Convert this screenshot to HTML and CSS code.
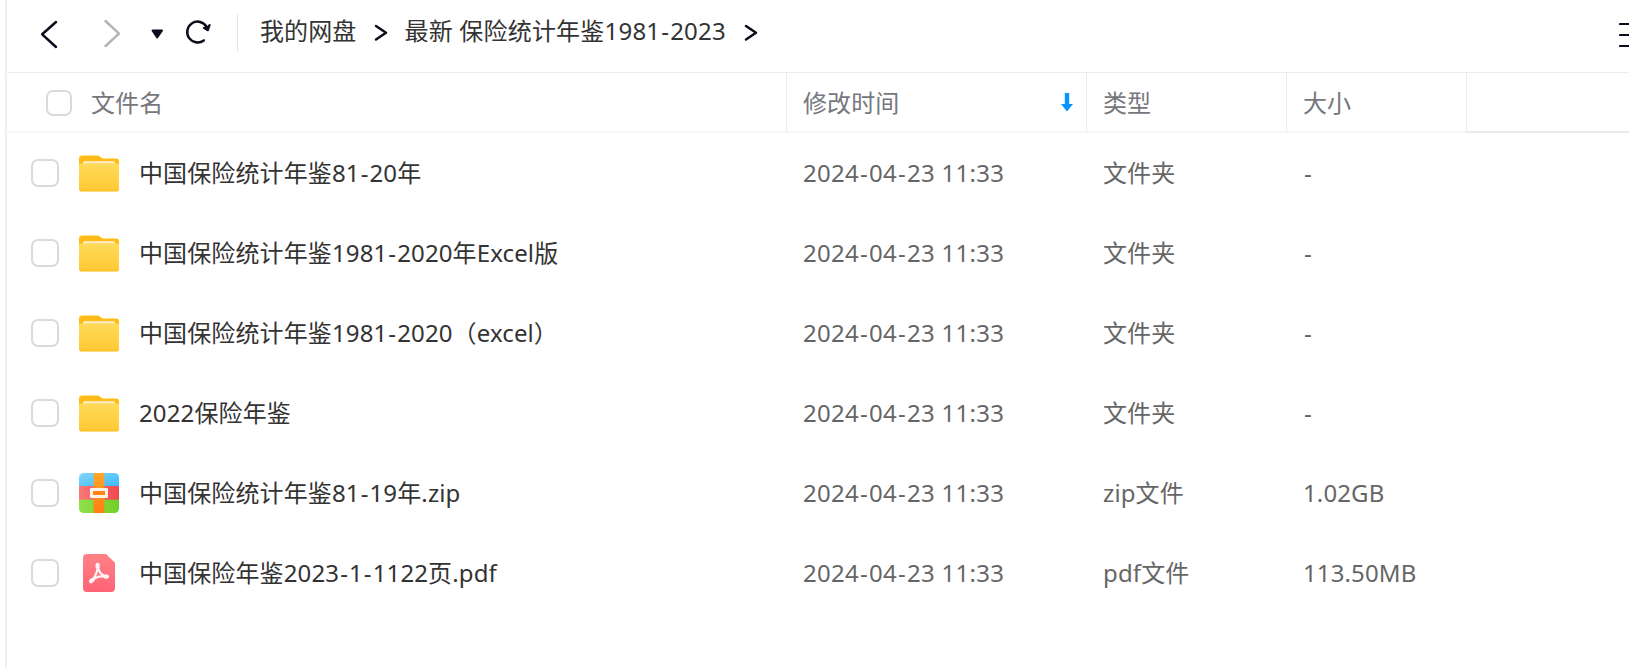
FILE: index.html
```
<!DOCTYPE html>
<html lang="zh-CN">
<head>
<meta charset="utf-8">
<title>我的网盘</title>
<link rel="stylesheet" href="styles.css">
</head>
<body>
<svg class="defs" width="0" height="0" aria-hidden="true">
  <defs>
    <linearGradient id="front" x1="0" y1="0" x2="0" y2="1"><stop offset="0" stop-color="#ffda58"/><stop offset="1" stop-color="#ffc933"/></linearGradient>
    <linearGradient id="back" x1="0" y1="0" x2="0" y2="1"><stop offset="0" stop-color="#ffbd1a"/><stop offset="1" stop-color="#ffb30a"/></linearGradient>
    <linearGradient id="blue" x1="0" y1="0" x2="1" y2="1"><stop offset="0" stop-color="#82d8ff"/><stop offset="1" stop-color="#3ab8f5"/></linearGradient>
    <linearGradient id="red" x1="0" y1="0" x2="1" y2="0"><stop offset="0" stop-color="#fb7878"/><stop offset="1" stop-color="#f04a4f"/></linearGradient>
    <linearGradient id="green" x1="0" y1="0" x2="1" y2="0"><stop offset="0" stop-color="#8fe04c"/><stop offset="1" stop-color="#72cf28"/></linearGradient>
    <linearGradient id="orange" x1="0" y1="0" x2="0" y2="1"><stop offset="0" stop-color="#ffa628"/><stop offset="1" stop-color="#ff7e12"/></linearGradient>
    <linearGradient id="pink" x1="0" y1="0" x2="0" y2="1"><stop offset="0" stop-color="#ff8286"/><stop offset="1" stop-color="#ff6376"/></linearGradient>
    <clipPath id="round"><rect width="40" height="40" rx="4.5"/></clipPath>
    <symbol id="folder" viewBox="0 0 40 40">
      <path d="M0 5.500Q0 2.500 3 2.500H18.500Q20 2.500 21.200 3.700L22 4.500Q23 5.500 24.500 5.500H37Q40 5.500 40 8.500V20H0Z" fill="url(#back)"/>
      <rect x="4" y="8" width="32" height="6" rx="1.5" fill="#ffe9b4"/>
      <path d="M0 12Q0 11 1 11H39Q40 11 40 12V35.500Q40 38.600 37 38.600H3Q0 38.600 0 35.500Z" fill="#ffb90e"/>
      <path d="M0 11.500Q0 10.500 1 10.500H39Q40 10.500 40 11.500V34.500Q40 37.500 37 37.500H3Q0 37.500 0 34.500Z" fill="url(#front)"/>
    </symbol>
    <symbol id="zip" viewBox="0 0 40 40">
      <g clip-path="url(#round)">
        <rect width="40" height="13.5" fill="url(#blue)"/>
        <rect y="13" width="40" height="14" fill="url(#red)"/>
        <rect y="26.7" width="40" height="13.3" fill="url(#green)"/>
        <rect x="14.6" width="10.8" height="40" fill="url(#orange)"/>
      </g>
      <rect x="11" y="15" width="18" height="10" rx="1.3" fill="#fff3e9"/>
      <rect x="14" y="18" width="12" height="4" fill="#ff8410"/>
    </symbol>
    <symbol id="pdf" viewBox="0 0 40 40">
      <path d="M8 1H27L36 9.800V35Q36 39 32 39H8Q4 39 4 35V5Q4 1 8 1Z" fill="url(#pink)"/>
      <g fill="none" stroke="#fff3f3" stroke-linecap="round" stroke-linejoin="round">
        <path d="M18.600 12.500C19 17 17 22.500 13 27.600C16 24.300 21.500 22.600 27.500 23.800C22.500 22.500 19.300 18 18.600 12.500Z" stroke-width="2.2"/>
        <path d="M18.600 11.900V13.800M12 28.200L13.600 26.900M26.300 23.600H28" stroke-width="4.2"/>
      </g>
    </symbol>
  </defs>
</svg>
<main class="app">
  <nav class="toolbar">
    <svg class="tool-icons" width="172" height="72" viewBox="0 0 172 72" fill="none" stroke="#080c1c" stroke-width="2.5" stroke-linecap="round" stroke-linejoin="round">
      <path d="M49 22L35.200 34.300L49 47"/>
      <path d="M98.500 21L112 33.700L98.500 46" stroke="#b5b5b6"/>
      <path d="M145.500 30.500H155L150.200 37.500Z" fill="#080c1c" stroke-width="2"/>
    </svg>
    <svg class="refresh" width="27" height="26" viewBox="0 0 27 26" fill="none" stroke="#080c1c" stroke-width="2.5" stroke-linecap="round" stroke-linejoin="round">
      <path d="M18.800 21.400A10.400 10.400 0 1 1 21.600 7.800"/>
      <path d="M18.800 9L22 8.600L24.700 6L22.900 11.300Z" fill="#080c1c" stroke-width="2"/>
    </svg>
    <span class="divider"></span>
    <span class="crumb">我的网盘</span>
    <svg class="chevron" width="14" height="20" viewBox="0 0 14 20"><path d="M2 3L12 9.800L2 16.500"/></svg>
    <span class="crumb current">最新 保险统计年鉴1981<i>-</i>2023</span>
    <svg class="chevron" width="14" height="20" viewBox="0 0 14 20"><path d="M2 3L12 9.800L2 16.500"/></svg>
    <svg class="menu" width="10" height="30" viewBox="0 0 10 30"><path d="M1 4H10M1 15H10M1 26H10"/></svg>
  </nav>
  <header class="grid head">
    <div class="cell"><span class="box"></span><span>文件名</span></div>
    <div class="cell">修改时间
      <svg class="sort" width="12" height="19" viewBox="0 0 12 19"><path d="M3.800 0H8.200V11H12L6 18.500L0 11H3.800Z" fill="#0495ff"/></svg>
    </div>
    <div class="cell">类型</div>
    <div class="cell">大小</div>
    <div class="cell rest"></div>
  </header>
  <section class="rows">
    <div class="grid row"><div class="cell"><span class="box"></span><svg class="file"><use href="#folder"/></svg><span>中国保险统计年鉴81<i>-</i>20年</span></div><div class="cell date">2024<i>-</i>04<i>-</i>23 11:33</div><div class="cell">文件夹</div><div class="cell"><i>-</i></div></div>
    <div class="grid row"><div class="cell"><span class="box"></span><svg class="file"><use href="#folder"/></svg><span>中国保险统计年鉴1981<i>-</i>2020年Excel版</span></div><div class="cell date">2024<i>-</i>04<i>-</i>23 11:33</div><div class="cell">文件夹</div><div class="cell"><i>-</i></div></div>
    <div class="grid row"><div class="cell"><span class="box"></span><svg class="file"><use href="#folder"/></svg><span>中国保险统计年鉴1981<i>-</i>2020（excel）</span></div><div class="cell date">2024<i>-</i>04<i>-</i>23 11:33</div><div class="cell">文件夹</div><div class="cell"><i>-</i></div></div>
    <div class="grid row"><div class="cell"><span class="box"></span><svg class="file"><use href="#folder"/></svg><span>2022保险年鉴</span></div><div class="cell date">2024<i>-</i>04<i>-</i>23 11:33</div><div class="cell">文件夹</div><div class="cell"><i>-</i></div></div>
    <div class="grid row"><div class="cell"><span class="box"></span><svg class="file"><use href="#zip"/></svg><span>中国保险统计年鉴81<i>-</i>19年.zip</span></div><div class="cell date">2024<i>-</i>04<i>-</i>23 11:33</div><div class="cell">zip文件</div><div class="cell">1.02GB</div></div>
    <div class="grid row"><div class="cell"><span class="box"></span><svg class="file"><use href="#pdf"/></svg><span>中国保险年鉴2023<i>-</i>1<i>-</i>1122页.pdf</span></div><div class="cell date">2024<i>-</i>04<i>-</i>23 11:33</div><div class="cell">pdf文件</div><div class="cell">113.50MB</div></div>
  </section>
</main>
</body>
</html>
```
FILE: styles.css
```
* { box-sizing: border-box; }
body {
  margin: 0;
  background: #fff;
  color: #333;
  font: 24px/32px "Noto Sans", "Noto Sans CJK SC", sans-serif;
  letter-spacing: .12px;
  overflow: hidden;
}
svg { display: block; flex: none; }
.defs { position: absolute; }
i { font-style: normal; padding: 0 1px; }
.app { height: 669px; margin-left: 5px; border-left: 2px solid #f0f0f1; }
.toolbar {
  display: flex;
  align-items: center;
  height: 73px;
  padding-bottom: 8px;
  border-bottom: 1px solid #ededee;
  white-space: nowrap;
}
.tool-icons { align-self: flex-start; }
.refresh { margin: 0 0 0 6px; }
.divider { width: 1px; height: 38px; margin: 1px 22px 0 25px; background: #e3e3e4; }
.crumb { height: 34px; }
.current { letter-spacing: .2px; }
.chevron { margin: 2px 16px 0 18px; }
.chevron path, .menu path { fill: none; stroke: #080c1c; stroke-width: 2.5; stroke-linecap: round; stroke-linejoin: round; }
.menu path { stroke-width: 2.2; }
.menu { height: 25px; margin: 5px 0 0 auto; }
.menu { height: 30px; }
.grid { display: grid; grid-template-columns: 780px 300px 200px 180px 1fr; }
.cell { display: flex; align-items: center; white-space: nowrap; }
.date { letter-spacing: .27px; }
.head { height: 60px; color: #75777d; }
.head .cell { padding: 2px 0 0 16px; border-right: 1px solid #ececee; border-bottom: 2px solid #f5f5f6; }
.head .cell:first-child { padding-left: 39px; }
.head .rest { border-right: 0; border-bottom-color: #ebebf0; }
.head .box { width: 26px; height: 26px; margin-right: 19px; }
.box { flex: none; width: 28px; height: 28px; border: 2px solid #dadadb; border-radius: 7px; }
.sort { margin: -1px 13px 0 auto; }
.row { height: 80px; color: #666; }
.row .cell { padding-left: 16px; }
.row .cell:first-child { padding-left: 24px; color: #333; }
.file { width: 40px; height: 40px; margin: 0 20px 0 20px; }
```
